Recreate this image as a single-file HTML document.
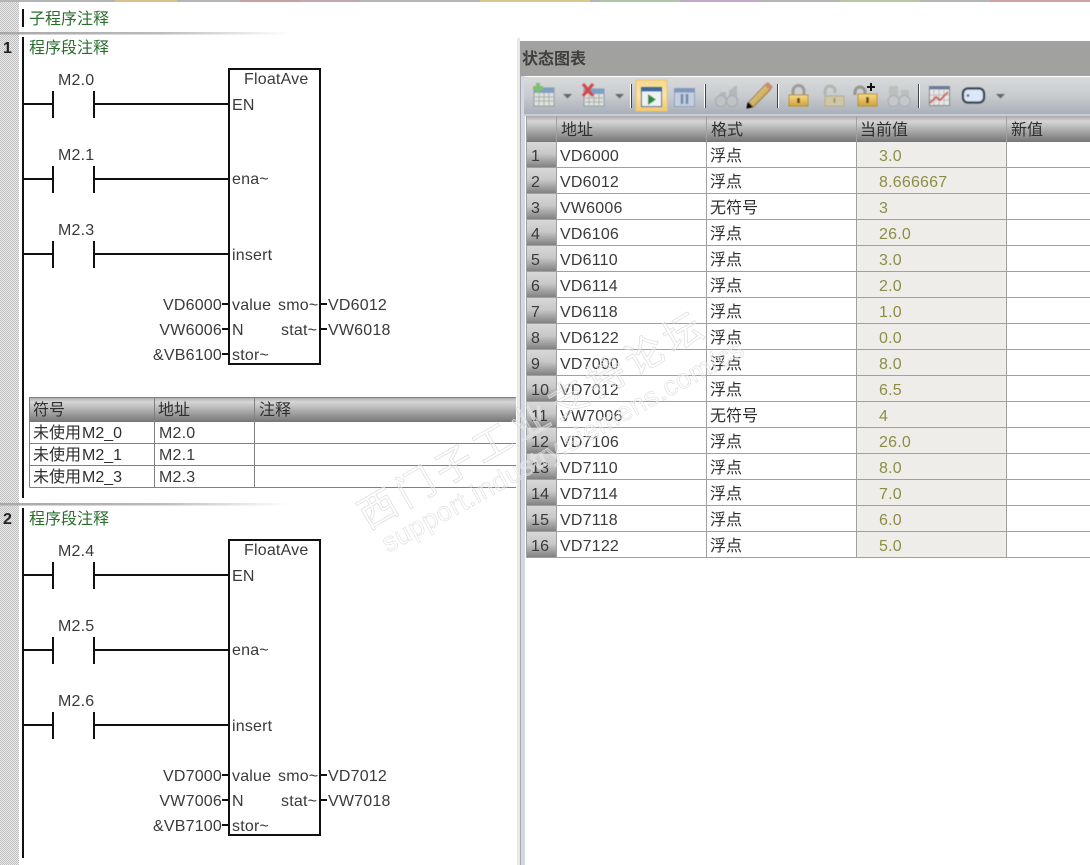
<!DOCTYPE html>
<html><head><meta charset="utf-8"><style>
html,body{margin:0;padding:0;background:#fff;width:1090px;height:865px;overflow:hidden}
svg{display:block}
text{font-family:"Liberation Sans","Noto Sans CJK SC",sans-serif;font-size:16px;fill:#3a3a3a;letter-spacing:.2px}
.z,.z tspan{letter-spacing:0;fill:#2e2e2e}
.g{fill:#2a6e2e;letter-spacing:0}
.c{fill:#8d8d45}
.w{font-size:38px;fill:#fff;fill-opacity:.3;stroke:#dcdcdc;stroke-width:.7;letter-spacing:6px}
.w2{font-size:27px;fill:#fff;fill-opacity:.3;stroke:#dedede;stroke-width:.6;letter-spacing:.6px}
</style></head><body>
<svg width="1090" height="865" viewBox="0 0 1090 865" xmlns="http://www.w3.org/2000/svg">
<defs>
<pattern id="dith" width="2" height="2" patternUnits="userSpaceOnUse"><rect width="2" height="2" fill="#ececec"/><rect width="1" height="1" fill="#bdbdbd"/><rect x="1" y="1" width="1" height="1" fill="#bdbdbd"/></pattern>
<linearGradient id="sep"><stop offset="0" stop-color="#a8a8a8"/><stop offset=".55" stop-color="#bbb"/><stop offset="1" stop-color="#fff"/></linearGradient>
<linearGradient id="hd" x2="0" y2="1"><stop offset="0" stop-color="#a8a8a8"/><stop offset=".2" stop-color="#d6d6d6"/><stop offset="1" stop-color="#767676"/></linearGradient>
<linearGradient id="idx" x1="0" y1="0" x2="0" y2="1"><stop offset="0" stop-color="#d8d8d8"/><stop offset=".45" stop-color="#c8c8c8"/><stop offset="1" stop-color="#7c7c7c"/></linearGradient>
<linearGradient id="tb" x2="0" y2="1"><stop offset="0" stop-color="#d8dadb"/><stop offset=".5" stop-color="#c9cccf"/><stop offset="1" stop-color="#a9afb8"/></linearGradient>
<linearGradient id="on" x2="0" y2="1"><stop offset="0" stop-color="#f6d88e"/><stop offset=".5" stop-color="#fbe3a6"/><stop offset="1" stop-color="#f3c76c"/></linearGradient>
<linearGradient id="gold" x2="0" y2="1"><stop offset="0" stop-color="#f5dc85"/><stop offset="1" stop-color="#d0a23c"/></linearGradient>
<linearGradient id="pen" x1="0" y1="0" x2="1" y2="1"><stop offset="0" stop-color="#f2dc98"/><stop offset="1" stop-color="#b88e38"/></linearGradient>
<filter id="soft" x="-5%" y="-20%" width="110%" height="140%"><feGaussianBlur stdDeviation=".55"/></filter>
</defs>

<!-- top strip -->
<rect x="0" y="0" width="1090" height="2" fill="#b4b4b4"/>
<rect x="115" y="0" width="62" height="2" fill="#d8c090"/>
<rect x="240" y="0" width="60" height="2" fill="#c9a0a0"/>
<rect x="300" y="0" width="60" height="2" fill="#c4a8ac"/>
<rect x="480" y="0" width="110" height="2" fill="#d8c890"/>
<rect x="600" y="0" width="80" height="2" fill="#b0c4a8"/>
<rect x="680" y="0" width="80" height="2" fill="#c0a8c8"/>
<rect x="840" y="0" width="80" height="2" fill="#b8c8a0"/>
<rect x="990" y="0" width="100" height="2" fill="#d0a0a8"/>

<!-- gutter -->
<rect x="0" y="2" width="19" height="863" fill="url(#dith)"/>
<rect x="0" y="32" width="290" height="2.5" fill="url(#sep)"/>
<rect x="0" y="503" width="290" height="2.5" fill="url(#sep)"/>
<rect x="22" y="9" width="2" height="18" fill="#111"/>
<rect x="22" y="37" width="2" height="461" fill="#111"/>
<rect x="22" y="508" width="2" height="350" fill="#111"/>
<text x="3" y="53" style="font-weight:bold;fill:#222">1</text>
<text x="3" y="524" style="font-weight:bold;fill:#222">2</text>
<text class="g" x="29" y="24">子程序注释</text>
<text class="g" x="29" y="53">程序段注释</text>
<text class="g" x="29" y="524">程序段注释</text>

<!-- network 1 -->
<g>
<g fill="none" stroke="#111" stroke-width="2">
<path d="M24 104H53M53 91V118M94 91V118M94 104H229"/>
<path d="M24 179H53M53 166V193M94 166V193M94 179H229"/>
<path d="M24 254H53M53 241V268M94 241V268M94 254H229"/>
<rect x="229" y="69" width="91" height="295"/>
<path d="M222 304H229M222 329H229M222 354H229M320 304H327M320 329H327"/>
</g>
<text x="58" y="85">M2.0</text><text x="58" y="160">M2.1</text><text x="58" y="235">M2.3</text>
<text x="244" y="84">FloatAve</text>
<text x="232" y="110">EN</text><text x="232" y="184">ena~</text><text x="232" y="260">insert</text>
<text x="232" y="310">value</text><text x="278" y="310">smo~</text>
<text x="232" y="335">N</text><text x="281" y="335">stat~</text>
<text x="232" y="360">stor~</text>
<text x="222" y="310" text-anchor="end">VD6000</text>
<text x="222" y="335" text-anchor="end">VW6006</text>
<text x="222" y="360" text-anchor="end">&amp;VB6100</text>
<text x="328" y="310">VD6012</text>
<text x="328" y="335">VW6018</text>
</g>

<!-- network 2 -->
<g>
<g fill="none" stroke="#111" stroke-width="2">
<path d="M24 575H53M53 562V589M94 562V589M94 575H229"/>
<path d="M24 650H53M53 637V664M94 637V664M94 650H229"/>
<path d="M24 725H53M53 712V739M94 712V739M94 725H229"/>
<rect x="229" y="540" width="91" height="295"/>
<path d="M222 775H229M222 800H229M222 825H229M320 775H327M320 800H327"/>
</g>
<text x="58" y="556">M2.4</text><text x="58" y="631">M2.5</text><text x="58" y="706">M2.6</text>
<text x="244" y="555">FloatAve</text>
<text x="232" y="581">EN</text><text x="232" y="655">ena~</text><text x="232" y="731">insert</text>
<text x="232" y="781">value</text><text x="278" y="781">smo~</text>
<text x="232" y="806">N</text><text x="281" y="806">stat~</text>
<text x="232" y="831">stor~</text>
<text x="222" y="781" text-anchor="end">VD7000</text>
<text x="222" y="806" text-anchor="end">VW7006</text>
<text x="222" y="831" text-anchor="end">&amp;VB7100</text>
<text x="328" y="781">VD7012</text>
<text x="328" y="806">VW7018</text>
</g>

<!-- symbol table -->
<rect x="29" y="397" width="487" height="25" fill="url(#hd)"/>
<g stroke="#808080" fill="none">
<path d="M29 397.500H516M29.500 397V487.500M154.500 397V487.500M254.500 397V487.500M29.500 443.500H516M29.500 465.500H516M29.500 487.500H516"/>
</g>
<text class="z" x="33" y="415">符号</text><text class="z" x="158" y="415">地址</text><text class="z" x="259" y="415">注释</text>
<text class="z" x="33" y="482" y2="0"></text>
<text class="z" x="33" y="438">未使用<tspan dx="1">M2_0</tspan></text><text x="159" y="438">M2.0</text>
<text class="z" x="33" y="460">未使用<tspan dx="1">M2_1</tspan></text><text x="159" y="460">M2.1</text>
<text class="z" x="33" y="482">未使用<tspan dx="1">M2_3</tspan></text><text x="159" y="482">M2.3</text>

<!-- status chart panel -->
<rect x="517" y="38" width="573" height="827" fill="#fff"/>
<rect x="517" y="38" width="3" height="827" fill="#e8e8e8"/>
<rect x="520" y="41" width="570" height="35" fill="#a1a2a0"/>
<text class="z" x="522" y="64" style="font-weight:bold;fill:#3f3f3f">状态图表</text>
<rect x="520" y="76" width="570" height="789" fill="#fff"/>
<rect x="520" y="76" width="1" height="789" fill="#a8a8a8"/>
<rect x="521" y="76" width="4" height="789" fill="#d4d8e6"/>
<rect x="524" y="77" width="566" height="37" fill="url(#tb)"/>
<rect x="524" y="114" width="566" height="2" fill="#c8ced8"/>

<!-- toolbar icons -->
<g filter="url(#soft)">
<!-- new -->
<rect x="534" y="88" width="20" height="18" fill="#dfe2dc" stroke="#8a9aa8"/><rect x="534" y="88" width="20" height="5" fill="#7ea0c8"/>
<path d="M539 93V105M544 93V105M549 93V105M535 97H553M535 101H553" stroke="#a8aca8" fill="none"/>
<path d="M538 83V93M533 88H543" stroke="#7fbf70" stroke-width="4" fill="none"/>
<path d="M563 94h9l-4.500 4.500z" fill="#666"/>
<!-- delete -->
<rect x="584" y="89" width="20" height="17" fill="#dfe2dc" stroke="#8a9aa8"/><rect x="584" y="89" width="20" height="5" fill="#7ea0c8"/>
<path d="M589 94V105M594 94V105M599 94V105M585 98H603M585 102H603" stroke="#a8aca8" fill="none"/>
<path d="M583 84L593 96M593 84L583 96" stroke="#d44848" stroke-width="3.200" fill="none"/>
<path d="M615 94h9l-4.500 4.500z" fill="#666"/>
</g>
<rect x="630" y="84" width="1" height="24" fill="#fff"/><rect x="631" y="84" width="1" height="24" fill="#444"/>
<rect x="636" y="80" width="31" height="31" fill="url(#on)" stroke="#e8c47a"/>
<g filter="url(#soft)">
<rect x="641.500" y="87.500" width="20" height="19" fill="#eef2f4" stroke="#3a6a9c"/><rect x="641.500" y="87.500" width="20" height="4" fill="#3a6a9c"/>
<path d="M648 94L656 99.500L648 105z" fill="#2f8a3a"/>
<!-- pause -->
<rect x="674.500" y="88.500" width="20" height="18" fill="#c4d0e0" stroke="#8ca0bc"/><rect x="674.500" y="88.500" width="20" height="4" fill="#7f98bc"/>
<path d="M682 94V104M687 94V104" stroke="#7088a8" stroke-width="2.500" fill="none"/>
</g>
<rect x="704" y="84" width="1" height="24" fill="#fff"/><rect x="705" y="84" width="1" height="24" fill="#444"/>
<g filter="url(#soft)">
<!-- binoculars faded -->
<path d="M716 100L721 92H726V98H729V91L735 86H737V100z" fill="#b4b8bb"/>
<circle cx="721" cy="101" r="5.500" fill="#c0c3c6" stroke="#a4a8ac"/><circle cx="732" cy="101" r="5.500" fill="#c0c3c6" stroke="#a4a8ac"/>
<!-- pencil -->
<path d="M749 102L766 84L771 89L753 107z" fill="url(#pen)" stroke="#8a6a28" stroke-width=".8"/>
<path d="M764 85L768 82L773 87L770 90z" fill="#cc8a78"/>
<path d="M747 108L748 103L752 107z" fill="#000" stroke="#000"/>
<!-- lock closed -->
<path d="M793 95V91a5.500 5.500 0 0 1 11 0V95" fill="none" stroke="#9c9c98" stroke-width="3"/>
<rect x="789" y="95" width="19" height="11" fill="url(#gold)" stroke="#b89030"/><path d="M798.500 98v5" stroke="#604010" stroke-width="2.500"/>
<!-- lock open -->
<path d="M825 95V91a5 5 0 0 1 10 0V93" fill="none" stroke="#b4b4b0" stroke-width="3"/>
<rect x="825" y="96" width="19" height="10" fill="#cfc7a4" stroke="#b4ac90"/><path d="M834.500 98v5" stroke="#a09870" stroke-width="2"/>
<!-- lock plus -->
<path d="M855 95V92a5 5 0 0 1 10 0V94" fill="none" stroke="#96968e" stroke-width="3"/>
<rect x="858" y="94" width="19" height="12" fill="url(#gold)" stroke="#b89030"/><path d="M867.500 97v6" stroke="#604010" stroke-width="2.500"/>
</g>
<path d="M871 83V91M867 87H875" stroke="#111" stroke-width="2" fill="none"/>
<g filter="url(#soft)">
<!-- binoculars 2 -->
<path d="M889 100V86H898V96H901V90H909V100z" fill="#bcc0bc"/>
<circle cx="893.500" cy="101" r="5.500" fill="#c4c8cc" stroke="#a8acb0"/><circle cx="904.500" cy="101" r="5.500" fill="#c4c8cc" stroke="#a8acb0"/>
<!-- chart -->
<rect x="929.500" y="86.500" width="20" height="19" fill="#e8e8e6" stroke="#7a8088"/>
<rect x="929.500" y="86.500" width="20" height="3" fill="#6a7ca0"/>
<path d="M934 90V105M939 90V105M944 90V105M930 95H949M930 100H949" stroke="#b8bcc0" fill="none"/>
<path d="M930 103L936 97L940 100L948 92" stroke="#d05850" stroke-width="1.800" fill="none"/>
<!-- tag -->
<rect x="963" y="88.500" width="21" height="14" rx="5" fill="#dce8fa" stroke="#39434d" stroke-width="2.200"/>
<circle cx="968" cy="95.500" r="1.400" fill="#667"/>
<path d="M996 94h9l-4.500 4.500z" fill="#666"/>
</g>
<rect x="777" y="84" width="1" height="24" fill="#444"/><rect x="778" y="84" width="1" height="24" fill="#fff"/>
<rect x="918" y="84" width="1" height="24" fill="#444"/><rect x="919" y="84" width="1" height="24" fill="#fff"/>

<!-- status table -->
<rect x="526" y="116" width="564" height="26" fill="url(#hd)"/>
<rect x="856" y="142" width="150" height="416" fill="#eeedea"/>
<g fill="url(#idx)">
<rect x="527" y="142" width="29" height="26"/><rect x="527" y="168" width="29" height="26"/><rect x="527" y="194" width="29" height="26"/><rect x="527" y="220" width="29" height="26"/>
<rect x="527" y="246" width="29" height="26"/><rect x="527" y="272" width="29" height="26"/><rect x="527" y="298" width="29" height="26"/><rect x="527" y="324" width="29" height="26"/>
<rect x="527" y="350" width="29" height="26"/><rect x="527" y="376" width="29" height="26"/><rect x="527" y="402" width="29" height="26"/><rect x="527" y="428" width="29" height="26"/>
<rect x="527" y="454" width="29" height="26"/><rect x="527" y="480" width="29" height="26"/><rect x="527" y="506" width="29" height="26"/><rect x="527" y="532" width="29" height="26"/>
</g>
<g stroke="#a0a0a0" fill="none">
<path d="M526.500 116V558M556.500 116V558M706.500 116V558M856.500 116V558M1006.500 116V558"/>
<path d="M526 167.500H1090M526 193.500H1090M526 219.500H1090M526 245.500H1090M526 271.500H1090M526 297.500H1090M526 323.500H1090M526 349.500H1090M526 375.500H1090M526 401.500H1090M526 427.500H1090M526 453.500H1090M526 479.500H1090M526 505.500H1090M526 531.500H1090M526 557.500H1090"/>
</g>
<text class="z" x="561" y="135">地址</text><text class="z" x="711" y="135">格式</text><text class="z" x="860" y="135">当前值</text><text class="z" x="1011" y="135">新值</text>

<g>
<text x="531" y="161">1</text><text x="560" y="161">VD6000</text><text class="z" x="710" y="161">浮点</text><text class="c" x="879" y="161">3.0</text>
<text x="531" y="187">2</text><text x="560" y="187">VD6012</text><text class="z" x="710" y="187">浮点</text><text class="c" x="879" y="187">8.666667</text>
<text x="531" y="213">3</text><text x="560" y="213">VW6006</text><text class="z" x="710" y="213">无符号</text><text class="c" x="879" y="213">3</text>
<text x="531" y="239">4</text><text x="560" y="239">VD6106</text><text class="z" x="710" y="239">浮点</text><text class="c" x="879" y="239">26.0</text>
<text x="531" y="265">5</text><text x="560" y="265">VD6110</text><text class="z" x="710" y="265">浮点</text><text class="c" x="879" y="265">3.0</text>
<text x="531" y="291">6</text><text x="560" y="291">VD6114</text><text class="z" x="710" y="291">浮点</text><text class="c" x="879" y="291">2.0</text>
<text x="531" y="317">7</text><text x="560" y="317">VD6118</text><text class="z" x="710" y="317">浮点</text><text class="c" x="879" y="317">1.0</text>
<text x="531" y="343">8</text><text x="560" y="343">VD6122</text><text class="z" x="710" y="343">浮点</text><text class="c" x="879" y="343">0.0</text>
<text x="531" y="369">9</text><text x="560" y="369">VD7000</text><text class="z" x="710" y="369">浮点</text><text class="c" x="879" y="369">8.0</text>
<text x="531" y="395">10</text><text x="560" y="395">VD7012</text><text class="z" x="710" y="395">浮点</text><text class="c" x="879" y="395">6.5</text>
<text x="531" y="421">11</text><text x="560" y="421">VW7006</text><text class="z" x="710" y="421">无符号</text><text class="c" x="879" y="421">4</text>
<text x="531" y="447">12</text><text x="560" y="447">VD7106</text><text class="z" x="710" y="447">浮点</text><text class="c" x="879" y="447">26.0</text>
<text x="531" y="473">13</text><text x="560" y="473">VD7110</text><text class="z" x="710" y="473">浮点</text><text class="c" x="879" y="473">8.0</text>
<text x="531" y="499">14</text><text x="560" y="499">VD7114</text><text class="z" x="710" y="499">浮点</text><text class="c" x="879" y="499">7.0</text>
<text x="531" y="525">15</text><text x="560" y="525">VD7118</text><text class="z" x="710" y="525">浮点</text><text class="c" x="879" y="525">6.0</text>
<text x="531" y="551">16</text><text x="560" y="551">VD7122</text><text class="z" x="710" y="551">浮点</text><text class="c" x="879" y="551">5.0</text>
</g>

<!-- watermark -->
<text class="w" transform="translate(368 530) rotate(-30)">西门子工业支持论坛</text>
<text class="w2" transform="translate(388 553) rotate(-29)">support.industry.siemens.com/cs</text>
</svg>
</body></html>
